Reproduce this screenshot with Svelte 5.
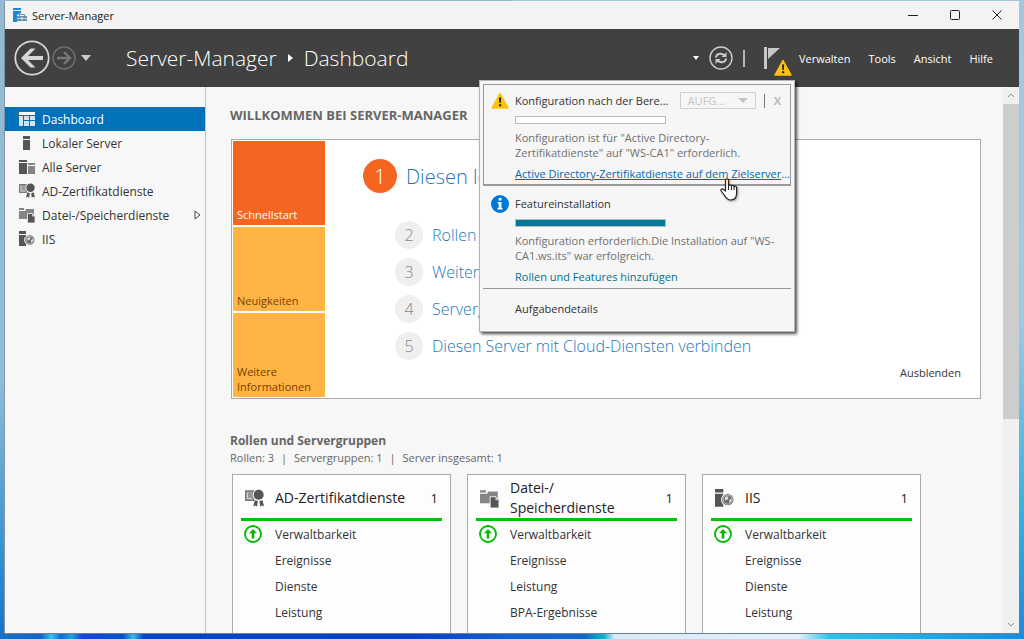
<script>
  const navItems = [
    { label: 'Dashboard', icon: 'dashboard' },
    { label: 'Lokaler Server', icon: 'server' },
    { label: 'Alle Server', icon: 'servers' },
    { label: 'AD-Zertifikatdienste', icon: 'cert' },
    { label: 'Datei-/Speicherdienste', icon: 'files', expandable: true },
    { label: 'IIS', icon: 'iis' }
  ];

  const menus = ['Verwalten', 'Tools', 'Ansicht', 'Hilfe'];

  const tiles = [
    { label: 'Schnellstart', active: true },
    { label: 'Neuigkeiten' },
    { label: 'Weitere Informationen' }
  ];

  const steps = [
    'Diesen lokalen Server konfigurieren',
    'Rollen und Features hinzufügen',
    'Weitere zu verwaltende Server hinzufügen',
    'Servergruppe erstellen',
    'Diesen Server mit Cloud-Diensten verbinden'
  ];

  const roles = [
    { name: 'AD-Zertifikatdienste', icon: 'cert', count: 1, rows: ['Ereignisse', 'Dienste', 'Leistung'] },
    { name: 'Datei-/\nSpeicherdienste', icon: 'files', count: 1, rows: ['Ereignisse', 'Leistung', 'BPA-Ergebnisse'] },
    { name: 'IIS', icon: 'iis', count: 1, rows: ['Ereignisse', 'Dienste', 'Leistung'] }
  ];

  let activeNav = $state('Dashboard');
</script>

{#snippet icon(name)}
  <svg class="icon" viewBox="0 0 16 16" aria-hidden="true">
    {#if name === 'dashboard'}
      <path fill="#fff" d="M0 1h16v3H0z" />
      <path fill="#cfe4f5" d="M0 5h4v10H0zM5 5h5v4H5zM11 5h5v4h-5zM5 10h5v5H5zM11 10h5v5h-5z" />
    {:else if name === 'server'}
      <path fill="#555" d="M4 1h7v3H4zM4 5h7v10H4z" />
    {:else if name === 'servers'}
      <path fill="#555" d="M0 1h8v2H0zM0 4h8v11H0z" />
      <path fill="#858585" d="M9 4h7v2H9zM9 7h7v8H9z" />
    {:else if name === 'cert'}
      <path fill="#999" stroke="#777" d="M.5 1.500h7v8h-7z" />
      <path fill="none" stroke="#ddd" stroke-width=".8" d="M2 3v5h4" />
      <circle cx="11.500" cy="4.800" r="5" fill="#f7f7f7" />
      <circle cx="11.500" cy="4.800" r="4.200" fill="#555" />
      <path fill="#555" d="M8.200 9.500l2.600.5-.6 5-1.200-1.200L7 14.500zM14.800 9.500l-2.600.5.6 5 1.200-1.200 2 .7z" />
    {:else if name === 'files'}
      <path fill="#858585" d="M0 1h5v2H0zM0 4h6l1-2h8v10H0z" />
      <path fill="#555" stroke="#f7f7f7" stroke-width=".8" d="M8.500 6.500h5l2.500 2.500V16H8.500z" />
      <path fill="#ccc" d="M13 6.500v3h3z" />
    {:else}
      <path fill="#555" d="M0 0h7v3H0zM0 4h7v11H0z" />
      <circle cx="10.800" cy="9" r="5.200" fill="#6b6b6b" stroke="#f7f7f7" />
      <circle cx="10.800" cy="9" r="3.800" fill="none" stroke="#ccc" stroke-width=".7" />
      <path fill="#ddd" d="M8.500 7l2-1 1 1-1 2-2 .5zM12 9l2-1v2l-2 2z" />
    {/if}
  </svg>
{/snippet}

{#snippet warning()}
  <svg class="warning" viewBox="0 0 18 17" aria-hidden="true">
    <path d="M9 1.500L17 16H1z" fill="#ffc20e" stroke="#ffc20e" stroke-width="1.500" stroke-linejoin="round" />
    <path d="M8 5.500h2.200l-.4 5.500H8.400zM8 12.300h2.200v2H8z" fill="#222" />
  </svg>
{/snippet}

<div class="desktop">
  <div class="window">
    <header class="titlebar">
      <svg class="app-icon" viewBox="0 0 14 14" aria-hidden="true">
        <path fill="#1b8ad6" d="M0 0h8v2H0zM0 3h8v2L4 7v7H0z" />
        <path fill="#6f91a6" d="M4 8h10v5H4z" />
        <path fill="none" stroke="#6f91a6" d="M6.500 8V6.500h5V8" />
        <path fill="#d8e4eb" d="M4 10h10v.7H4zM8 9.500h2v2H8z" />
      </svg>
      <span class="title">Server-Manager</span>
      <div class="window-buttons">
        <button aria-label="Minimieren"><svg viewBox="0 0 10 10"><path d="M0 5.500h10" /></svg></button>
        <button aria-label="Maximieren"><svg viewBox="0 0 10 10"><rect x=".5" y=".5" width="9" height="9" rx="1" /></svg></button>
        <button aria-label="Schließen"><svg viewBox="0 0 10 10"><path d="M.5.5l9 9M9.500.5l-9 9" /></svg></button>
      </div>
    </header>

    <div class="toolbar">
      <button class="back" aria-label="Zurück">
        <svg viewBox="0 0 36 36">
          <circle cx="18" cy="18" r="16.700" fill="none" stroke="#d6d6d6" stroke-width="1.800" />
          <path fill="#d6d6d6" d="M7 18l9.500-9.500h5L14 16h15v4H14l7.500 7.500h-5z" />
        </svg>
      </button>
      <button class="forward" aria-label="Vorwärts" disabled>
        <svg viewBox="0 0 24 24">
          <circle cx="12" cy="12" r="11" fill="none" stroke="#6c6c6c" stroke-width="1.600" />
          <path fill="none" stroke="#777" stroke-width="2.400" d="M5 12h13M12 6l6 6-6 6" />
        </svg>
      </button>
      <button class="history" aria-label="Verlauf"><svg viewBox="0 0 10 6"><path d="M0 0h10L5 6z" /></svg></button>

      <nav class="breadcrumb" aria-label="Pfad">
        <a href="#server-manager">Server-Manager</a>
        <svg viewBox="0 0 5 8" aria-hidden="true"><path d="M0 0l5 4-5 4z" /></svg>
        <span>Dashboard</span>
      </nav>

      <button class="drop" aria-label="Optionen"><svg viewBox="0 0 6 4"><path d="M0 0h6L3 4z" /></svg></button>
      <button class="refresh" aria-label="Aktualisieren">
        <svg viewBox="0 0 24 24">
          <circle cx="12" cy="12" r="11" fill="none" stroke="#ccc" stroke-width="1.400" />
          <path fill="none" stroke="#ccc" stroke-width="2" d="M7 11.500c.3-4 5.500-5 8.300-2M17 12.500c-.3 4-5.500 5-8.300 2" />
          <path fill="#ccc" d="M17.500 6v5h-5zM6.500 18v-5h5z" />
        </svg>
      </button>
      <span class="divider"></span>
      <button class="flag" aria-label="Benachrichtigungen">
        <svg viewBox="0 0 16 22"><path fill="#c8c8c8" d="M0 0h3v22H0zM4 1h12L4 12z" /></svg>
        <span class="badge">{@render warning()}</span>
      </button>
      <div class="menus">
        {#each menus as menu}
          <button>{menu}</button>
        {/each}
      </div>

      <section class="notifications" aria-label="Benachrichtigungen">
        <article class="notice selected">
          {@render warning()}
          <div class="notice-body">
            <div class="notice-head">
              <h3>Konfiguration nach der Bere...</h3>
              <button class="tasks" disabled>AUFG... <svg viewBox="0 0 10 5"><path d="M0 0h10L5 5z" /></svg></button>
              <span class="split"></span>
              <button class="dismiss" aria-label="Entfernen" disabled>X</button>
            </div>
            <progress value="0" max="100" aria-label="Fortschritt der Konfiguration"></progress>
            <p>Konfiguration ist für "Active Directory-<br />Zertifikatdienste" auf "WS-CA1" erforderlich.</p>
            <a class="underlined" href="#configure"><span>Active Directory-Zertifikatdienste auf dem Zielserver</span>...</a>
          </div>
          <svg class="cursor" viewBox="0 0 18 23" aria-hidden="true">
            <path
              fill="#fff"
              stroke="#222"
              stroke-width="1.200"
              stroke-linejoin="round"
              d="M5.500 13V2.300c0-2 3-2 3 0V8c.3-1.400 2.700-1.300 2.900.3.400-1.300 2.500-1 2.700.5.500-1 2.500-.8 2.500.8V15c0 4-2 7-6 7-3.500 0-4.600-2-6-4.500L1.200 13c-.9-1.700.9-2.700 2.200-1.500z"
            />
            <path fill="none" stroke="#222" d="M8.500 8v4M11.400 8.500V12M14.100 9v3" />
          </svg>
        </article>

        <article class="notice">
          <svg class="info" viewBox="0 0 18 18" aria-hidden="true">
            <circle cx="9" cy="9" r="9" fill="#0078d7" />
            <path fill="#fff" d="M7.700 3h2.800v2.500H7.700zM6.700 7h3.800v6h1v1.500h-5V13h1.200V8.500h-1z" />
          </svg>
          <div class="notice-body">
            <div class="notice-head">
              <h3>Featureinstallation</h3>
            </div>
            <progress value="100" max="100" aria-label="Fortschritt der Installation"></progress>
            <p>Konfiguration erforderlich.Die Installation auf "WS-<br />CA1.ws.its" war erfolgreich.</p>
            <a class="teal" href="#features">Rollen und Features hinzufügen</a>
          </div>
        </article>

        <a class="details" href="#details">Aufgabendetails</a>
      </section>
    </div>

    <div class="body">
      <nav class="sidebar" aria-label="Navigation">
        {#each navItems as item}
          <button class:active={activeNav === item.label} onclick={() => (activeNav = item.label)}>
            {@render icon(item.icon)}
            <span>{item.label}</span>
            {#if item.expandable}
              <svg class="expand" viewBox="0 0 7 10"><path d="M1 1l5 4-5 4z" /></svg>
            {/if}
          </button>
        {/each}
      </nav>

      <main>
        <h1>WILLKOMMEN BEI SERVER-MANAGER</h1>

        <section class="welcome">
          <div class="tiles">
            {#each tiles as tile}
              <button class:current={tile.active}>{tile.label}</button>
            {/each}
          </div>
          <ol>
            {#each steps as step, i}
              <li class:first={i === 0}><span class="num">{i + 1}</span><a href="#step-{i + 1}">{step}</a></li>
            {/each}
          </ol>
          <button class="hide">Ausblenden</button>
        </section>

        <h2>Rollen und Servergruppen</h2>
        <p class="summary"><span>Rollen: 3</span><span>|</span><span>Servergruppen: 1</span><span>|</span><span>Server insgesamt: 1</span></p>

        <div class="cards">
          {#each roles as role}
            <section class="card">
              <header>
                {@render icon(role.icon)}
                <h3>{role.name}</h3>
                <span>{role.count}</span>
              </header>
              <ul>
                <li>
                  <svg class="ok" viewBox="0 0 18 18" aria-hidden="true">
                    <circle cx="9" cy="9" r="8" fill="none" stroke="#00b900" stroke-width="1.800" />
                    <path fill="#00b900" d="M9 4l4 4.200h-2.700V13.500H7.700V8.200H5z" />
                  </svg>
                  <a href="#manage">Verwaltbarkeit</a>
                </li>
                {#each role.rows as row}
                  <li><a href="#{row}">{row}</a></li>
                {/each}
              </ul>
            </section>
          {/each}
        </div>
      </main>

      <div class="scrollbar" aria-hidden="true">
        <svg viewBox="0 0 8 5"><path d="M1 4l3-3 3 3" /></svg>
        <div class="thumb"></div>
        <svg viewBox="0 0 8 5"><path d="M1 1l3 3 3-3" /></svg>
      </div>
    </div>
  </div>
</div>

<style>
  :global(body) {
    margin: 0;
    font-family: 'Open Sans', 'Noto Sans', sans-serif;
    font-size: 11px;
    color: #333;
  }

  button {
    padding: 0;
    border: none;
    background: none;
    font: inherit;
    color: inherit;
    text-align: left;
  }

  a {
    color: inherit;
    text-decoration: none;
  }

  h1,
  h2,
  h3,
  p,
  ol,
  ul {
    margin: 0;
    padding: 0;
    font-weight: 400;
    list-style: none;
  }

  svg {
    display: block;
    flex: none;
  }

  .desktop {
    box-sizing: border-box;
    height: 100vh;
    padding: 1px 5px 5px 4px;
    background:
      linear-gradient(90deg, #1872c8, #1263c8 4%, #35c5e8 5%, #1264d8 6%, #22a6de 7%, #1c40e0 8%, #0752c8 12%, #38b8e4 13%, #0846cc 14%, #0a3ec8 40%, #1560cc 50%, #1466c8 57%, #10b4cc 59%, #d9ebf8 60%, #e2effa 78%, #2fc2e8 81%, #178ce0 100%) bottom / 100% 6px no-repeat,
      linear-gradient(#93bad2, #8ebcd9 60%, #3b95d2 85%, #1870c8) left / 50% 100% no-repeat,
      linear-gradient(#a2c8e0, #9ccbe6 50%, #2fb4e4 80%, #1a8ae2) right / 50% 100% no-repeat,
      #93bad2;
  }

  .window {
    display: flex;
    flex-direction: column;
    box-sizing: border-box;
    height: 100%;
    border-left: 1px solid #7f95a6;
    border-bottom: 1px solid #6c8297;
    background: #f7f7f7;
  }

  .titlebar {
    display: flex;
    align-items: center;
    flex: none;
    height: 28px;
    padding-left: 8px;
    background: #f3f3f3;
  }

  .app-icon {
    width: 14px;
    height: 14px;
  }

  .title {
    flex: 1;
    margin-left: 5px;
    color: #222;
  }

  .window-buttons {
    display: flex;
    gap: 32px;
    margin-right: 17px;
  }

  .window-buttons svg {
    width: 10px;
    height: 10px;
    fill: none;
    stroke: #222;
  }

  .toolbar {
    position: relative;
    display: flex;
    align-items: center;
    flex: none;
    height: 58px;
    padding-left: 9px;
    background: #414141;
    color: #fff;
  }

  .back svg {
    width: 36px;
    height: 36px;
  }

  .forward svg,
  .refresh svg {
    width: 24px;
    height: 24px;
  }

  .forward {
    margin-left: 2px;
  }

  .history {
    margin-left: 5px;
  }

  .history svg {
    width: 10px;
    height: 6px;
    fill: #ccc;
  }

  .breadcrumb {
    display: flex;
    align-items: center;
    flex: 1;
    gap: 11px;
    margin-left: 35px;
    font-size: 21px;
    font-weight: 300;
    white-space: nowrap;
  }

  .breadcrumb svg {
    width: 5px;
    height: 8px;
    fill: #fff;
  }

  .drop svg {
    width: 6px;
    height: 4px;
    fill: #fff;
  }

  .refresh {
    margin-left: 10px;
  }

  .divider {
    width: 2px;
    height: 17px;
    margin: 0 19px 0 10px;
    background: #b5b5b5;
  }

  .flag {
    position: relative;
    width: 28px;
    height: 28px;
  }

  .flag > svg {
    width: 16px;
    height: 22px;
  }

  .badge {
    position: absolute;
    top: 15px;
    right: 0;
  }

  .warning {
    width: 18px;
    height: 17px;
  }

  .menus {
    display: flex;
    gap: 18px;
    margin: 0 26px 0 7px;
  }

  .notifications {
    position: absolute;
    top: 51px;
    right: 224px;
    z-index: 1;
    box-sizing: border-box;
    width: 316px;
    padding: 3px;
    border: 1px solid #b5b5b5;
    background: #f6f6f6;
    box-shadow: 2px 2px 3px rgba(0, 0, 0, 0.7);
    color: #333;
  }

  .notice {
    position: relative;
    display: flex;
    align-items: flex-start;
    gap: 6px;
    padding: 9px 6px 4px 8px;
    border-bottom: 1px solid #999;
  }

  .notice.selected {
    padding: 7px 6px 3px 7px;
    border: 1px solid #999;
    border-bottom-width: 2px;
  }

  .notice-body {
    flex: 1;
    min-width: 0;
    white-space: nowrap;
  }

  .notice-head {
    display: flex;
    align-items: center;
    height: 17px;
  }

  .notice-head h3 {
    flex: 1;
    font-size: 11px;
  }

  .tasks {
    display: flex;
    align-items: center;
    justify-content: space-between;
    box-sizing: border-box;
    width: 76px;
    height: 17px;
    padding: 0 7px;
    border: 1px solid #d0d0d0;
    color: #c4c4c4;
  }

  .tasks svg {
    width: 10px;
    height: 5px;
    fill: #c4c4c4;
  }

  .split {
    width: 1px;
    height: 14px;
    margin: 0 9px 0 8px;
    background: #777;
  }

  .dismiss {
    margin-right: 3px;
    color: #bbb;
    font-weight: 700;
  }

  progress {
    display: block;
    appearance: none;
    box-sizing: border-box;
    width: 151px;
    height: 8px;
    margin: 7px 0 6px;
    border: 1px solid #bbb;
    background: #fff;
  }

  progress::-webkit-progress-bar {
    background: #fff;
  }

  progress::-webkit-progress-value {
    background: #007896;
  }

  .notice p {
    margin-bottom: 6px;
    color: #707070;
    line-height: 15px;
  }

  .notice a {
    display: block;
    color: #0067b8;
    line-height: 15px;
  }

  .notice .underlined span {
    text-decoration: underline;
  }

  .notice .teal {
    color: #00718c;
  }

  .info {
    width: 18px;
    height: 18px;
  }

  .cursor {
    position: absolute;
    right: 52px;
    bottom: -17px;
    z-index: 1;
    width: 18px;
    height: 23px;
    filter: drop-shadow(1px 1px 1px rgba(0, 0, 0, 0.4));
  }

  .details {
    display: block;
    padding: 12px 32px 12px;
    line-height: 15px;
  }

  .body {
    display: flex;
    flex: 1;
    min-height: 0;
  }

  .sidebar {
    box-sizing: border-box;
    flex: none;
    width: 201px;
    padding-top: 20px;
    border-right: 1px solid #c4c4c4;
    font-size: 12px;
  }

  .sidebar button {
    display: flex;
    align-items: center;
    width: 100%;
    height: 24px;
    padding: 0 4px 0 14px;
  }

  .sidebar span {
    flex: 1;
    margin-left: 7px;
    white-space: nowrap;
  }

  .sidebar .active {
    background: #0072bc;
    color: #fff;
  }

  .icon {
    width: 16px;
    height: 16px;
  }

  .expand {
    width: 7px;
    height: 10px;
    fill: none;
    stroke: #444;
  }

  main {
    flex: 1;
    min-width: 0;
    overflow: hidden;
    padding: 19px 22px 0 24px;
  }

  h1 {
    color: #666;
    font-size: 13px;
    font-weight: 700;
    line-height: 18px;
  }

  .welcome {
    display: flex;
    margin: 15px 0 0 1px;
    padding: 1px;
    border: 1px solid #aaa;
    background: #fff;
  }

  .tiles {
    display: grid;
    grid-template-rows: repeat(3, 84px);
    gap: 2px;
    width: 92px;
  }

  .tiles button {
    display: flex;
    align-items: flex-end;
    padding: 0 4px 3px;
    background: #ffb444;
    color: #7b3f00;
    line-height: 15px;
  }

  .tiles .current {
    background: #f56522;
    color: #fff;
  }

  .welcome ol {
    flex: 1;
    padding: 17px 0 0 38px;
    white-space: nowrap;
  }

  .welcome li {
    display: flex;
    align-items: center;
    gap: 9px;
    height: 28px;
    margin: 0 0 9px 32px;
    color: #2475bd;
    font-size: 16px;
    font-weight: 300;
  }

  .welcome .first {
    height: 36px;
    margin: 0 0 27px;
    font-size: 20px;
  }

  .num {
    display: flex;
    align-items: center;
    justify-content: center;
    width: 28px;
    height: 28px;
    border-radius: 50%;
    background: #efefef;
    color: #888;
  }

  .first .num {
    width: 34px;
    height: 34px;
    background: #f56522;
    color: #fff;
  }

  .hide {
    align-self: flex-end;
    margin: 0 18px 17px 0;
  }

  h2 {
    margin-top: 33px;
    color: #666;
    font-size: 12px;
    font-weight: 700;
    line-height: 18px;
  }

  .summary {
    display: flex;
    gap: 7px;
    color: #666;
    line-height: 15px;
  }

  .cards {
    display: flex;
    gap: 16px;
    margin: 9px 0 0 2px;
  }

  .card {
    box-sizing: border-box;
    flex: none;
    width: 219px;
    padding: 3px 8px 20px;
    border: 1px solid #aaa;
    background: #fdfdfd;
  }

  .card header {
    display: flex;
    align-items: center;
    height: 40px;
    padding: 0 4px;
    border-bottom: 3px solid #00c400;
    color: #222;
    font-size: 13px;
    line-height: 20px;
  }

  .card .icon {
    width: 19px;
    height: 19px;
  }

  .card h3 {
    flex: 1;
    margin-left: 11px;
    font-size: 14px;
    white-space: pre-line;
  }

  .card li {
    position: relative;
    display: flex;
    align-items: center;
    height: 26px;
    padding-left: 34px;
    font-size: 12px;
  }

  .ok {
    position: absolute;
    left: 3px;
    width: 18px;
    height: 18px;
  }

  .scrollbar {
    display: flex;
    flex-direction: column;
    align-items: center;
    flex: none;
    width: 16px;
    box-sizing: border-box;
    padding: 6px 0;
    background: #f0f0f0;
  }

  .scrollbar svg {
    width: 8px;
    height: 5px;
    fill: none;
    stroke: #888;
  }

  .thumb {
    width: 100%;
    height: 59%;
    margin: 6px 0 auto;
    background: #cdcdcd;
  }
</style>
